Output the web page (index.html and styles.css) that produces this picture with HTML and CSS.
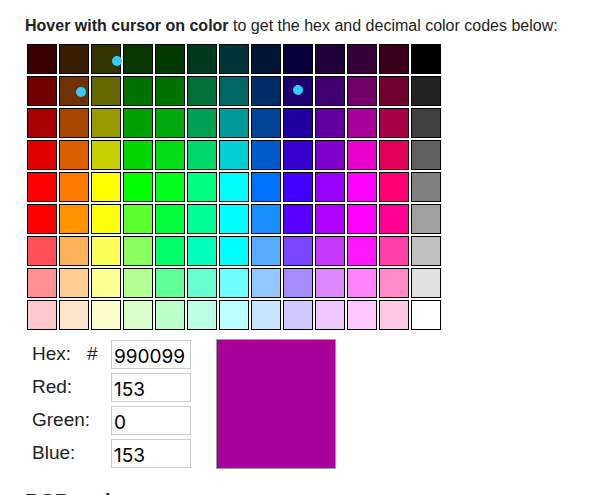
FILE: index.html
```html
<!DOCTYPE html>
<html lang="en">
<head>
<meta charset="utf-8">
<title>RGB color codes</title>
<link rel="stylesheet" href="styles.css">
</head>
<body>
<main class="page">
  <p class="intro"><b>Hover with cursor on color</b> to get the hex and decimal color codes below:</p>
  <div class="palette" id="palette"></div>
  <section class="result">
    <form class="fields">
      <label for="hex">Hex:</label><span class="hash">#</span><input id="hex" type="text" value="990099">
      <label for="red">Red:</label><input id="red" type="text" value="153">
      <label for="green">Green:</label><input id="green" type="text" value="0">
      <label for="blue">Blue:</label><input id="blue" type="text" value="153">
    </form>
    <div class="preview" id="preview"></div>
  </section>
  <h2 class="heading">RGB codes</h2>
</main>
<script src="palette.js"></script>
</body>
</html>
```
FILE: styles.css
```css
* {
  box-sizing: border-box;
}

html {
  height: 100%;
  overflow: hidden;
}

body {
  margin: 0;
  height: 100%;
  overflow: auto;
  scrollbar-width: none;
  background: #fff;
  color: #222;
  font-family: "Liberation Sans", Arial, sans-serif;
}

.page {
  padding: 16px 24px;
}

.intro {
  margin: 0;
  padding-left: 1px;
  font-size: 16px;
  line-height: 20px;
}

.palette {
  display: grid;
  grid-template-columns: repeat(13, 30px);
  grid-auto-rows: 30px;
  gap: 2px;
  padding: 8px 3px;
}

.swatch {
  position: relative;
  padding: 0;
  border: 1px solid #000;
  border-radius: 0;
}

.dot {
  position: absolute;
  z-index: 1;
  width: 10px;
  height: 10px;
  border-radius: 50%;
  background: #3cf;
}

.dot-olive {
  left: 20px;
  top: 11px;
}

.dot-brown {
  left: 16px;
  top: 10px;
}

.dot-indigo {
  left: 9px;
  top: 8px;
}

.result {
  display: flex;
  align-items: flex-start;
  gap: 25px;
  padding: 1px 8px;
}

.fields {
  display: grid;
  grid-template-columns: 55px 24px 80px;
  grid-auto-rows: 29px;
  row-gap: 4px;
  padding-top: 1px;
  font-size: 19px;
  line-height: 27px;
}

.fields label {
  grid-column: 1;
}

.hash {
  grid-column: 2;
}

.fields input {
  grid-column: 3;
  width: 100%;
  padding: 3px 2px 0;
  border: 1px solid #ccc;
  background: #fff;
  color: #000;
  font-family: Inter, "Liberation Sans", sans-serif;
  font-size: 19px;
}

.preview {
  width: 120px;
  height: 130px;
  border: 1px solid #999;
  background: #a09;
}

.heading {
  margin: 19px 0 0;
  padding-left: 1px;
  font-size: 20px;
  line-height: 24px;
}
```
FILE: palette.js
```javascript
const rows = [
  "380000 381c00 333300 083800 003800 00381c 003333 001633 080038 200038 380038 38001a 000000",
  "700000 703200 666600 007000 007000 007038 006666 002c66 1c0070 400070 700066 70002c 222222",
  "a80000 a84600 999900 00a000 00a810 00a052 009999 004499 2200a0 6000a0 aa0099 a80044 404040",
  "e00000 dc6000 c8d000 00d800 00dc18 00d86c 00d0d0 005acc 3400d0 8000cc e800cc e0005c 606060",
  "ff0000 ff7800 ffff00 00ff00 00ff1c 00ff80 00ffff 0070ff 4400ff 9800ff ff00ff ff0074 808080",
  "ff0000 ff9400 fcff08 5cff30 00ff38 00ff98 00ffff 1890ff 5800ff b000ff ff00ff ff0090 a0a0a0",
  "ff5058 ffb058 fcff58 8cff60 00ff68 00ffb8 00ffff 58acff 7848ff c838ff ff18ff ff40a8 c0c0c0",
  "ff9094 ffcc94 fcff94 b4ff94 60ff98 68ffd0 70ffff 90c8ff a48cff dc88ff ff84ff ff8cc8 e0e0e0",
  "ffc8cc ffe4cc ffffcc d8ffcc b8ffcc bcffe4 bcffff c8e4ff d0c8ff ecc8ff ffc8ff ffc8e4 ffffff"
];
const dots = { "333300": "olive", "703200": "brown", "1c0070": "indigo" };
const palette = document.getElementById("palette");

for (const row of rows) {
  for (const hex of row.split(" ")) {
    const swatch = document.createElement("button");
    swatch.type = "button";
    swatch.className = "swatch";
    swatch.style.backgroundColor = "#" + hex;
    if (dots[hex]) {
      const dot = document.createElement("span");
      dot.className = "dot dot-" + dots[hex];
      swatch.append(dot);
    }
    swatch.addEventListener("mouseenter", () => {
      document.getElementById("hex").value = hex;
      ["red", "green", "blue"].forEach((id, i) => {
        document.getElementById(id).value = parseInt(hex.slice(i * 2, i * 2 + 2), 16);
      });
      document.getElementById("preview").style.backgroundColor = "#" + hex;
    });
    palette.append(swatch);
  }
}
```
